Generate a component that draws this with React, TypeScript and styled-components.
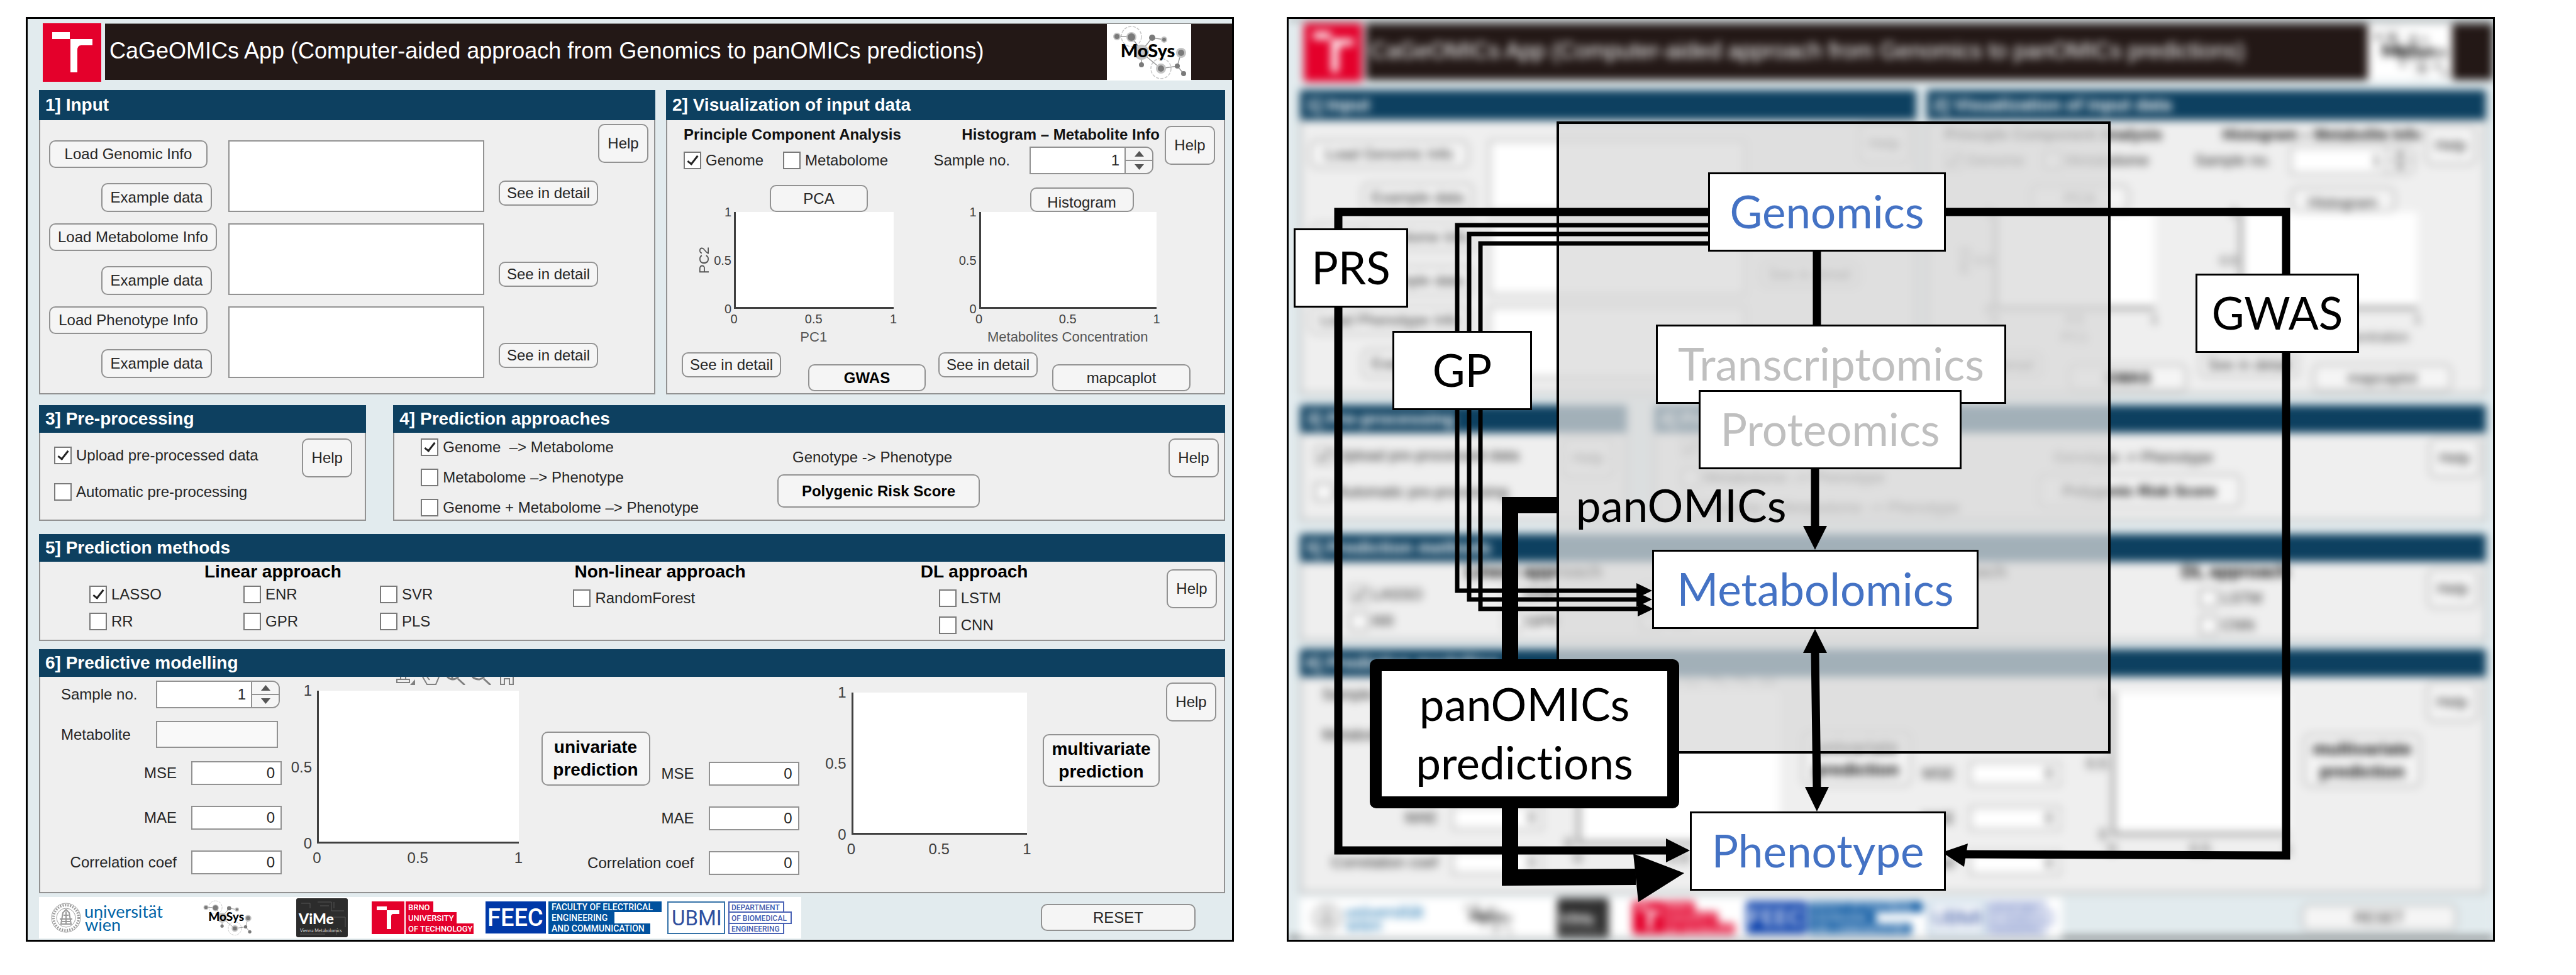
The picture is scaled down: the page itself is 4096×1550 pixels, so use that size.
import React, { useId } from "react";
import styled, { createGlobalStyle, css } from "styled-components";

const GlobalStyle = createGlobalStyle`
  *, *::before, *::after { box-sizing: border-box; }
  body { margin: 0; background: #fff; }
  body, button, input, textarea { font-family: "Liberation Sans", Arial, sans-serif; }
`;

const color = {
  backdrop: "#e2ebee",
  navy: "#0d4060",
  panel: "#efefef",
  line: "#929292",
  control: "#f5f5f5",
  text: "#262626",
  axis: "#404040",
  red: "#e4002b",
  bar: "#231816",
};

/* ---------- page and windows ---------- */

const Page = styled.main`
  display: flex;
  align-items: flex-start;
  gap: 84px;
  padding: 27px 129px 53px 41px;
`;

const Window = styled.section`
  position: relative;
  flex: 1 1 0;
  min-width: 0;
  border: 3px solid #000;
  background: ${color.backdrop};
  overflow: hidden;
`;

const AppBody = styled.div<{ $blurred?: boolean }>`
  display: flex;
  flex-direction: column;
  padding-top: 7px;
  background: ${color.backdrop};
  font-size: 24px;
  line-height: 28px;
  color: ${color.text};
  ${(p) =>
    p.$blurred &&
    css`
      filter: blur(7px);
      box-shadow: inset 0 -5px #444, inset 0 3px #777;
    `}
`;

const TopBar = styled.header`
  display: flex;
  align-items: flex-start;
  gap: 6px;
  padding-left: 24px;
  margin-bottom: 13px;
`;

const LogoTile = styled.svg`
  flex: none;
  display: block;
`;

const TitleStrip = styled.div`
  flex: 1;
  min-width: 0;
  display: flex;
  align-items: center;
  justify-content: space-between;
  height: 90px;
  padding: 0 65px 0 7px;
  background: ${color.bar};
  border-top: 1px solid #8a8a8a;
`;

const Title = styled.h1`
  margin: 0;
  padding-bottom: 4px;
  font-size: 36px;
  line-height: 44px;
  font-weight: 400;
  color: #fff;
  white-space: nowrap;
`;

const Row = styled.div<{ $cols: string; $gap?: number; $below: number }>`
  display: grid;
  grid-template-columns: ${(p) => p.$cols};
  gap: ${(p) => p.$gap ?? 0}px;
  padding: 0 11px 0 18px;
  margin-bottom: ${(p) => p.$below}px;
`;

const PanelBox = styled.section<{ $h: number }>`
  display: flex;
  flex-direction: column;
  min-width: 0;
  min-height: ${(p) => p.$h}px;
  border: 2px solid ${color.line};
  background: ${color.panel};
`;

const PanelHeading = styled.h2<{ $h: number }>`
  margin: -2px -2px 0;
  height: ${(p) => p.$h}px;
  padding-left: 10px;
  line-height: ${(p) => p.$h}px;
  font-size: 28px;
  font-weight: 700;
  color: #fff;
  background: ${color.navy};
  white-space: nowrap;
`;

/* ---------- controls ---------- */

const Button = styled.button<{ $w?: number; $h?: number; $bold?: boolean; $big?: boolean; $low?: boolean }>`
  flex: none;
  width: ${(p) => (p.$w ? `${p.$w}px` : "auto")};
  height: ${(p) => p.$h ?? 40}px;
  padding: ${(p) => (p.$low ? "8px 0 0" : "0")};
  border: 2px solid ${color.line};
  border-radius: 10px;
  background: ${color.control};
  color: ${(p) => (p.$bold ? "#000" : color.text)};
  font-size: ${(p) => (p.$big ? 28 : 24)}px;
  line-height: ${(p) => (p.$big ? 36 : 28)}px;
  font-weight: ${(p) => (p.$bold ? 700 : 400)};
  white-space: nowrap;
`;

const LoadButton = styled(Button)`
  justify-self: start;
  min-width: 252px;
  padding: 0 12px;
`;

const HelpButton = styled(Button).attrs({ $w: 80, $h: 62, children: "Help" })`
  align-self: start;
  justify-self: end;
`;

const Tick = styled.label`
  display: flex;
  align-items: center;
  gap: 7px;
  height: 28px;
  white-space: pre;
`;

const Box = styled.input.attrs({ type: "checkbox" })`
  appearance: none;
  flex: none;
  position: relative;
  width: 28px;
  height: 28px;
  margin: 0;
  border: 2px solid #7a7a7a;
  background: #fff;
  &:checked::after {
    content: "";
    position: absolute;
    left: 8px;
    top: 1px;
    width: 9px;
    height: 18px;
    border: solid #222;
    border-width: 0 3px 3px 0;
    transform: rotate(38deg);
  }
`;

const Check = ({ label, on }: { label: string; on?: boolean }) => (
  <Tick>
    <Box defaultChecked={on} />
    {label}
  </Tick>
);

const TextBox = styled.input<{ $w: number; $h: number; $idle?: boolean }>`
  width: ${(p) => p.$w}px;
  height: ${(p) => p.$h}px;
  padding: 0 9px;
  border: 2px solid ${color.line};
  background: ${(p) => (p.$idle ? "#f9f9f9" : "#fff")};
  color: ${color.text};
  font-size: 24px;
  text-align: right;
`;

const Notes = styled.textarea`
  display: block;
  width: 100%;
  height: 114px;
  border: 2px solid ${color.line};
  background: #fff;
  resize: none;
`;

const SpinFrame = styled.span`
  display: flex;
  width: 197px;
  height: 44px;
  border: 2px solid ${color.line};
  border-radius: 0 12px 12px 0;
  background: ${color.control};
  overflow: hidden;
`;

const SpinValue = styled.input`
  flex: 1;
  min-width: 0;
  padding: 0 8px;
  border: 0;
  border-right: 2px solid ${color.line};
  background: #fff;
  color: ${color.text};
  font-size: 24px;
  text-align: right;
`;

const SpinKeys = styled.span`
  display: flex;
  flex-direction: column;
  width: 42px;
`;

const SpinKey = styled.button`
  flex: 1;
  display: flex;
  align-items: center;
  justify-content: center;
  padding: 0;
  border: 0;
  background: ${color.control};
  & + & { border-top: 2px solid ${color.line}; }
`;

const Spinner = ({ id }: { id: string }) => (
  <SpinFrame>
    <SpinValue id={id} inputMode="numeric" defaultValue="1" />
    <SpinKeys>
      <SpinKey type="button" aria-label="Increase">
        <svg width="15" height="9" viewBox="0 0 15 9"><path d="M0 9 7.500 0 15 9z" fill="#555" /></svg>
      </SpinKey>
      <SpinKey type="button" aria-label="Decrease">
        <svg width="15" height="9" viewBox="0 0 15 9"><path d="M0 0 7.500 9 15 0z" fill="#555" /></svg>
      </SpinKey>
    </SpinKeys>
  </SpinFrame>
);

/* ---------- plots ---------- */

const PlotGrid = styled.div<{ $gutter: number; $large?: boolean }>`
  display: grid;
  grid-template-columns: ${(p) => p.$gutter}px minmax(0, 1fr);
  font-size: ${(p) => (p.$large ? 24 : 20)}px;
  color: ${color.axis};
`;

const PlotSide = styled.div`
  display: flex;
  justify-content: flex-end;
  align-items: stretch;
`;

const AxisTitle = styled.span`
  font-size: 22px;
  line-height: 26px;
  text-align: center;
  color: #555;
`;

const BottomTitle = styled(AxisTitle)`
  grid-column: 2;
`;

const SideTitle = styled(AxisTitle)`
  line-height: 22px;
  writing-mode: vertical-rl;
  transform: rotate(180deg);
`;

const YTicks = styled.div<{ $large?: boolean }>`
  display: flex;
  flex-direction: column;
  justify-content: space-between;
  width: ${(p) => (p.$large ? 42 : 36)}px;
  padding-right: ${(p) => (p.$large ? 8 : 4)}px;
  span {
    display: flex;
    align-items: center;
    justify-content: flex-end;
    height: 0;
  }
`;

const XTicks = styled.div<{ $large?: boolean }>`
  grid-column: 2;
  display: flex;
  align-items: center;
  justify-content: space-between;
  height: ${(p) => (p.$large ? 46 : 32)}px;
  span {
    display: flex;
    justify-content: center;
    width: 0;
  }
`;

const PlotArea = styled.div<{ $h: number }>`
  height: ${(p) => p.$h}px;
  border: solid ${color.axis};
  border-width: 0 0 3px 3px;
  background: #fff;
`;

const Plot = (p: { gutter: number; h: number; large?: boolean; x?: string; y?: string }) => (
  <PlotGrid $gutter={p.gutter} $large={p.large}>
    <PlotSide>
      {p.y && <SideTitle>{p.y}</SideTitle>}
      <YTicks $large={p.large}>
        <span>1</span>
        <span>0.5</span>
        <span>0</span>
      </YTicks>
    </PlotSide>
    <PlotArea $h={p.h} />
    <XTicks $large={p.large}>
      <span>0</span>
      <span>0.5</span>
      <span>1</span>
    </XTicks>
    {p.x && <BottomTitle>{p.x}</BottomTitle>}
  </PlotGrid>
);

/* ---------- 1] input ---------- */

const InputBody = styled.div`
  display: flex;
  padding: 6px 9px 0 14px;
`;

const InputRows = styled.div`
  flex: 1;
  display: flex;
  flex-direction: column;
  gap: 18px;
  padding-top: 26px;
`;

const InputRow = styled.div`
  display: grid;
  grid-template-columns: 285px minmax(0, 1fr);
  height: 114px;
`;

const InputActions = styled.div`
  display: flex;
  flex-direction: column;
  align-items: flex-start;
  justify-content: space-between;
`;

const ExampleButton = styled(Button).attrs({ $w: 176, $h: 46 })`
  margin-left: 83px;
`;

const DetailButton = styled(Button).attrs({ $w: 158, $h: 40, children: "See in detail" })``;

const DetailColumn = styled.div`
  display: flex;
  flex-direction: column;
  align-items: flex-end;
  gap: 89px;
  width: 181px;
  padding-top: 90px;
`;

const kinds = ["Genomic", "Metabolome", "Phenotype"];

const InputPanel = () => (
  <PanelBox $h={484}>
    <PanelHeading $h={48}>1] Input</PanelHeading>
    <InputBody>
      <InputRows>
        {kinds.map((kind) => (
          <InputRow key={kind}>
            <InputActions>
              <LoadButton type="button" $h={44}>{`Load ${kind} Info`}</LoadButton>
              <ExampleButton type="button">Example data</ExampleButton>
            </InputActions>
            <Notes aria-label={`${kind} info`} />
          </InputRow>
        ))}
      </InputRows>
      <DetailColumn>
        {kinds.map((kind) => (
          <DetailButton key={kind} type="button" />
        ))}
      </DetailColumn>
      <HelpButton type="button" />
    </InputBody>
  </PanelBox>
);

/* ---------- 2] visualization ---------- */

const VisualBody = styled.div`
  display: grid;
  grid-template-columns: minmax(0, 389fr) minmax(0, 359fr) 80px;
  gap: 8px;
  padding: 9px 14px 0 26px;
`;

const VisualColumn = styled.div`
  display: flex;
  flex-direction: column;
`;

const SubTitle = styled.h3<{ $right?: boolean }>`
  margin: 0 0 5px;
  font-size: 24px;
  line-height: 28px;
  color: #111;
  text-align: ${(p) => (p.$right ? "right" : "left")};
  white-space: nowrap;
`;

const Controls = styled.div<{ $spread?: boolean }>`
  display: flex;
  align-items: center;
  justify-content: ${(p) => (p.$spread ? "space-between" : "flex-start")};
  gap: 31px;
  height: 44px;
  padding-right: ${(p) => (p.$spread ? 10 : 0)}px;
  margin-bottom: 17px;
`;

const PlotButton = styled.div<{ $left: number }>`
  display: flex;
  align-items: flex-end;
  height: 43px;
  padding-left: ${(p) => p.$left}px;
`;

const PlotPad = styled.div<{ $right: number }>`
  padding-right: ${(p) => p.$right}px;
`;

const VisualActions = styled.div`
  display: grid;
  grid-template-columns: 201px 207px 181px auto;
  align-items: end;
  justify-content: start;
  height: 62px;
  padding-left: 23px;
  margin-top: 11px;
  ${DetailButton} { align-self: start; }
`;

const VisualPanel = () => {
  const id = useId();
  return (
    <PanelBox $h={484}>
      <PanelHeading $h={48}>2] Visualization of input data</PanelHeading>
      <VisualBody>
        <VisualColumn>
          <SubTitle>Principle Component Analysis</SubTitle>
          <Controls>
            <Check label="Genome" on />
            <Check label="Metabolome" />
          </Controls>
          <PlotButton $left={137}>
            <Button type="button" $w={156} $h={43}>PCA</Button>
          </PlotButton>
          <PlotPad $right={56}>
            <Plot gutter={80} h={154} x="PC1" y="PC2" />
          </PlotPad>
        </VisualColumn>
        <VisualColumn>
          <SubTitle $right>Histogram – Metabolite Info</SubTitle>
          <Controls $spread>
            <label htmlFor={id}>Sample no.</label>
            <Spinner id={id} />
          </Controls>
          <PlotButton $left={153}>
            <Button type="button" $w={165} $h={39} $low>Histogram</Button>
          </PlotButton>
          <PlotPad $right={5}>
            <Plot gutter={72} h={154} x="Metabolites Concentration" />
          </PlotPad>
        </VisualColumn>
        <HelpButton type="button" />
      </VisualBody>
      <VisualActions>
        <DetailButton type="button" />
        <Button type="button" $w={187} $h={43} $bold>GWAS</Button>
        <DetailButton type="button" />
        <Button type="button" $w={220} $h={43}>mapcaplot</Button>
      </VisualActions>
    </PanelBox>
  );
};

/* ---------- 3] and 4] ---------- */

const SplitBody = styled.div<{ $right: number }>`
  display: flex;
  padding: 9px ${(p) => p.$right}px 0 0;
`;

const CheckList = styled.div<{ $left: number; $top: number; $gap: number }>`
  flex: 1;
  display: flex;
  flex-direction: column;
  gap: ${(p) => p.$gap}px;
  padding: ${(p) => p.$top}px 0 0 ${(p) => p.$left}px;
`;

const RiskColumn = styled.div`
  display: flex;
  flex-direction: column;
  flex: none;
  width: 622px;
  gap: 11px;
  padding-top: 14px;
  p {
    margin: 0;
    padding-left: 24px;
    line-height: 32px;
  }
`;

const PreprocessingPanel = () => (
  <PanelBox $h={184}>
    <PanelHeading $h={44}>3] Pre-processing</PanelHeading>
    <SplitBody $right={20}>
      <CheckList $left={22} $top={13} $gap={30}>
        <Check label="Upload pre-processed data" on />
        <Check label="Automatic pre-processing" />
      </CheckList>
      <HelpButton type="button" />
    </SplitBody>
  </PanelBox>
);

const ApproachPanel = () => (
  <PanelBox $h={184}>
    <PanelHeading $h={44}>4] Prediction approaches</PanelHeading>
    <SplitBody $right={8}>
      <CheckList $left={42} $top={0} $gap={20}>
        <Check label="Genome  –> Metabolome" on />
        <Check label="Metabolome –> Phenotype" />
        <Check label="Genome + Metabolome –> Phenotype" />
      </CheckList>
      <RiskColumn>
        <p>Genotype -&gt; Phenotype</p>
        <Button type="button" $w={322} $h={53} $bold>Polygenic Risk Score</Button>
      </RiskColumn>
      <HelpButton type="button" />
    </SplitBody>
  </PanelBox>
);

/* ---------- 5] prediction methods ---------- */

const MethodsBody = styled.div`
  display: grid;
  grid-template-columns: minmax(0, 769fr) minmax(0, 552fr) minmax(0, 391fr) 80px;
  padding: 0 11px 0 78px;
`;

const GroupTitle = styled.h3<{ $left: number; $below: number }>`
  margin: 0 0 ${(p) => p.$below}px;
  padding-left: ${(p) => p.$left}px;
  font-size: 28px;
  line-height: 32px;
  color: #000;
`;

const Choices = styled.div<{ $cols: string; $left?: number }>`
  display: grid;
  grid-template-columns: ${(p) => p.$cols};
  row-gap: 15px;
  padding-left: ${(p) => p.$left ?? 0}px;
`;

const HelpDrop = styled.div`
  padding-top: 12px;
`;

const MethodsPanel = () => (
  <PanelBox $h={170}>
    <PanelHeading $h={44}>5] Prediction methods</PanelHeading>
    <MethodsBody>
      <div>
        <GroupTitle $left={183} $below={6}>Linear approach</GroupTitle>
        <Choices $cols="245px 217px 1fr">
          <Check label="LASSO" on />
          <Check label="ENR" />
          <Check label="SVR" />
          <Check label="RR" />
          <Check label="GPR" />
          <Check label="PLS" />
        </Choices>
      </div>
      <div>
        <GroupTitle $left={2} $below={12}>Non-linear approach</GroupTitle>
        <Choices $cols="1fr">
          <Check label="RandomForest" />
        </Choices>
      </div>
      <div>
        <GroupTitle $left={0} $below={12}>DL approach</GroupTitle>
        <Choices $cols="1fr" $left={29}>
          <Check label="LSTM" />
          <Check label="CNN" />
        </Choices>
      </div>
      <HelpDrop>
        <HelpButton type="button" />
      </HelpDrop>
    </MethodsBody>
  </PanelBox>
);

/* ---------- 6] predictive modelling ---------- */

const ModelBody = styled.div`
  display: grid;
  grid-template-columns: 351px minmax(0, 376fr) 446px minmax(0, 362fr) 211px 90px;
  padding: 0 12px 0 33px;
`;

const Fields = styled.div`
  display: flex;
  flex-direction: column;
  gap: 21px;
  padding-top: 6px;
`;

const LeadField = styled.div`
  display: grid;
  grid-template-columns: 151px 197px;
  align-items: center;
  height: 43px;
`;

const Scores = styled.div`
  display: flex;
  flex-direction: column;
  gap: 33px;
`;

const ScoreField = styled.label`
  display: flex;
  align-items: center;
  justify-content: flex-end;
  gap: 23px;
`;

const Score = ({ label }: { label: string }) => (
  <ScoreField>
    {label}
    <TextBox $w={144} $h={38} inputMode="decimal" defaultValue="0" />
  </ScoreField>
);

const ModelPlot = styled.div<{ $top: number }>`
  padding-top: ${(p) => p.$top}px;
`;

const AxesTools = styled.svg`
  display: block;
  margin: 0 7px 9px auto;
`;

const Univariate = styled(Scores)`
  padding: 87px 0 0 36px;
`;

const RunRow = styled.div`
  display: flex;
  align-items: flex-end;
  justify-content: space-between;
`;

const RunSlot = styled.div`
  padding: 91px 0 0 25px;
`;

const HelpSlot = styled.div`
  display: flex;
  justify-content: flex-end;
  padding-top: 9px;
`;

const ModelPanel = () => {
  const id = useId();
  return (
    <PanelBox $h={388}>
      <PanelHeading $h={44}>6] Predictive modelling</PanelHeading>
      <ModelBody>
        <Fields>
          <LeadField>
            <label htmlFor={`${id}n`}>Sample no.</label>
            <Spinner id={`${id}n`} />
          </LeadField>
          <LeadField>
            <label htmlFor={`${id}m`}>Metabolite</label>
            <TextBox id={`${id}m`} $w={194} $h={43} $idle />
          </LeadField>
          <Scores>
            <Score label="MSE" />
            <Score label="MAE" />
            <Score label="Correlation coef" />
          </Scores>
        </Fields>
        <ModelPlot $top={0}>
          <AxesTools width="189" height="13" viewBox="0 0 189 13" fill="none" stroke="#808080" strokeWidth="2">
            <path d="M2 4h20v5H2zM8 4V0M16 4V0" />
            <path d="M31 13V4l-8 9z" fill="#808080" stroke="none" />
            <path d="M43 0l7 12h14l5-12M50 0l4 5" />
            <path d="M82 0q9 8 18 0M90 0v3M99 3l11 10M122 0q10 8 19 0M140 3l11 10" strokeWidth="3" />
            <path d="M167 0v12h6V3h8v9h6V0" />
          </AxesTools>
          <Plot gutter={56} h={243} large />
        </ModelPlot>
        <Univariate>
          <RunRow>
            <Button type="button" $w={173} $h={86} $bold $big>
              univariate
              <br />
              prediction
            </Button>
            <Score label="MSE" />
          </RunRow>
          <Score label="MAE" />
          <Score label="Correlation coef" />
        </Univariate>
        <ModelPlot $top={25}>
          <Plot gutter={83} h={226} large />
        </ModelPlot>
        <RunSlot>
          <Button type="button" $w={186} $h={84} $bold $big>
            multivariate
            <br />
            prediction
          </Button>
        </RunSlot>
        <HelpSlot>
          <HelpButton type="button" />
        </HelpSlot>
      </ModelBody>
    </PanelBox>
  );
};

/* ---------- logos ---------- */

const markPath = "M15 14h28v11h36v10H61q-6 0-6 8v35H44V25H15z";

const ButMark = ({ size }: { size: number }) => (
  <LogoTile width={size} height={size} viewBox="0 0 93 93" role="img" aria-label="BUT">
    <rect width="93" height="93" fill={color.red} />
    <path d={markPath} fill="#fff" />
  </LogoTile>
);

const Molecule = ({ w, h }: { w: number; h: number }) => (
  <LogoTile width={w} height={h} viewBox="0 0 134 90" role="img" aria-label="MoSys">
    <rect width="134" height="90" fill="#fff" />
    <g fill="none" stroke="#999" strokeWidth="1.500">
      <circle cx="39" cy="20" r="16" strokeDasharray="5 2" stroke="#c8c8c8" />
      <circle cx="86" cy="71" r="16" strokeDasharray="5 2" stroke="#c8c8c8" />
      <path d="M16 20h23l16 24M56 42l16-20 19 3M55 46v19M58 48l28 23 26-4 10 12M112 67l6-21" />
    </g>
    <g fill="#c4c4c4">
      <circle cx="16" cy="20" r="6" />
      <circle cx="39" cy="21" r="8" />
      <circle cx="91" cy="25" r="5" />
      <circle cx="118" cy="46" r="8" />
      <circle cx="86" cy="71" r="8" />
      <circle cx="55" cy="45" r="12" />
    </g>
    <g fill="#7a7a7a">
      <circle cx="16" cy="20" r="4" />
      <circle cx="39" cy="21" r="6" />
      <circle cx="72" cy="22" r="5" />
      <circle cx="91" cy="25" r="3" />
      <circle cx="118" cy="46" r="5" />
      <circle cx="55" cy="65" r="4" />
      <circle cx="86" cy="71" r="5" />
      <circle cx="112" cy="67" r="4" />
      <circle cx="122" cy="79" r="4" />
    </g>
    <text x="65" y="53" textAnchor="middle" fontFamily="Lato, sans-serif" fontWeight="900" fontSize="29" fill="#000">
      MoSys
    </text>
  </LogoTile>
);

const Footer = styled.footer`
  display: flex;
  align-items: center;
  justify-content: space-between;
  height: 68px;
  padding: 0 58px 3px 18px;
`;

const LogoStrip = styled.div`
  display: grid;
  grid-template-columns: 236px 154px 120px 181px 289px auto;
  align-items: center;
  width: 1212px;
  height: 66px;
  padding-left: 19px;
  background: #fff;
`;

const BlockLogo = ({ w, children }: { w: number; children: React.ReactNode }) => (
  <LogoTile width={w} height="52" viewBox={`0 0 ${w} 52`}>
    {children}
  </LogoTile>
);

const caption = { fontFamily: "Roboto, sans-serif", fontWeight: 500, fontSize: 14 };

const Logos = () => (
  <LogoStrip>
    <LogoTile width="180" height="56" viewBox="0 0 180 56">
      <g fill="none" stroke="#9a9a9a">
        <circle cx="24" cy="28" r="23" strokeWidth="1" />
        <circle cx="24" cy="28" r="20" strokeWidth="4" strokeDasharray="2 2" />
        <circle cx="24" cy="28" r="15" />
        <path d="M16 38l3-18 5-5 5 5 3 18zM20 24h8M24 18v20M14 30h20M18 34h12" strokeWidth="2" />
      </g>
      <g fill="#0063a6" fontFamily="Lato, sans-serif" fontSize="27">
        <text x="53" y="28">universität</text>
        <text x="54" y="49">wien</text>
      </g>
    </LogoTile>
    <Molecule w={88} h={60} />
    <LogoTile width="82" height="62" viewBox="0 0 82 62">
      <rect width="82" height="62" rx="3" fill="#2c2c2c" />
      <path d="M34 6h22v14h20M60 6v10M38 12h14M56 30h22v16M8 8h14v8M6 57h40M64 50v8" stroke="#555" fill="none" />
      <text x="4" y="41" fontFamily="Lato, sans-serif" fontWeight="900" fontSize="23" fill="#fff">ViMe</text>
      <text x="6" y="54" fontFamily="Lato, sans-serif" fontSize="7" fill="#ddd">Vienna Metabolomics</text>
    </LogoTile>
    <BlockLogo w={162}>
      <path d="M0 0h52v52H0zM54 0h44v17h37v18h27v17H54z" fill={color.red} />
      <path d="M8 8h16v6h20v6H34q-3 0-3 4v20h-7V14H8z" fill="#fff" />
      <g {...caption} fontSize={13} fill="#fff">
        <text x="58" y="14">BRNO</text>
        <text x="58" y="31">UNIVERSITY</text>
        <text x="58" y="48">OF TECHNOLOGY</text>
      </g>
    </BlockLogo>
    <BlockLogo w={280}>
      <path d="M0 0h96v51H0z" fill="#0038a8" />
      <path d="M100 0h180v17h-75v18h57v17H100z" fill="#00519e" />
      <text x="3" y="39" fontFamily="Roboto, sans-serif" fontWeight="500" fontSize="38" fill="#fff">FEEC</text>
      <g {...caption} fill="#fff">
        <text x="105" y="14">FACULTY OF ELECTRICAL</text>
        <text x="105" y="31">ENGINEERING</text>
        <text x="105" y="48">AND COMMUNICATION</text>
      </g>
    </BlockLogo>
    <BlockLogo w={198}>
      <rect x="1" y="1" width="90" height="50" fill="none" stroke="#3572a8" strokeWidth="2" />
      <path d="M98 1h87v16H98zM98 17h99v18H98zM98 35h87v16H98z" fill="none" stroke="#4a63b5" strokeWidth="2" />
      <text x="7" y="38" fontFamily="Roboto, sans-serif" fontSize="33" fill="#2f4f9e">UBMI</text>
      <g {...caption} fontSize={12} fill="#3f5bb0">
        <text x="102" y="14">DEPARTMENT</text>
        <text x="102" y="31">OF BIOMEDICAL</text>
        <text x="102" y="48">ENGINEERING</text>
      </g>
    </BlockLogo>
  </LogoStrip>
);

/* ---------- application ---------- */

const CagApp = ({ blurred }: { blurred?: boolean }) => (
  <AppBody $blurred={blurred} inert={blurred} aria-hidden={blurred}>
    <TopBar>
      <ButMark size={93} />
      <TitleStrip>
        <Title>CaGeOMICs App (Computer-aided approach from Genomics to panOMICs predictions)</Title>
        <Molecule w={134} h={90} />
      </TitleStrip>
    </TopBar>
    <Row $cols="minmax(0, 980fr) minmax(0, 889fr)" $gap={17} $below={17}>
      <InputPanel />
      <VisualPanel />
    </Row>
    <Row $cols="minmax(0, 520fr) minmax(0, 1322fr)" $gap={43} $below={21}>
      <PreprocessingPanel />
      <ApproachPanel />
    </Row>
    <Row $cols="minmax(0, 1fr)" $below={13}>
      <MethodsPanel />
    </Row>
    <Row $cols="minmax(0, 1fr)" $below={6}>
      <ModelPanel />
    </Row>
    <Footer>
      <Logos />
      <Button type="button" $w={246} $h={43}>RESET</Button>
    </Footer>
  </AppBody>
);

/* ---------- workflow diagram ---------- */

const Canvas = styled.div`
  position: absolute;
  inset: 0;
  font-family: Lato, "Open Sans", sans-serif;
  font-variant-ligatures: none;
  font-size: 71px;
  line-height: 93px;
`;

const Scope = styled.div`
  position: absolute;
  left: 426px;
  top: 163px;
  width: 881px;
  height: 1005px;
  border: 4px solid #000;
  background: rgba(217, 217, 217, 0.735);
`;

const Wires = styled.svg`
  position: absolute;
  left: 0;
  top: 0;
`;

const Node = styled.div<{ $x: number; $y: number; $w: number; $tone?: string }>`
  position: absolute;
  left: ${(p) => p.$x}px;
  top: ${(p) => p.$y}px;
  width: ${(p) => p.$w}px;
  height: 126px;
  display: flex;
  align-items: center;
  justify-content: center;
  padding-bottom: 4px;
  border: 3px solid #000;
  background: #fff;
  color: ${(p) => p.$tone ?? "#000"};
  white-space: nowrap;
`;

const Caption = styled(Node)`
  border: 0;
  background: none;
`;

const Outcome = styled(Node)`
  height: 237px;
  border-width: 19px;
  border-radius: 10px;
  text-align: center;
`;

const blue = "#4472c4";
const grey = "#bfbfbf";

const Workflow = () => (
  <Canvas>
    <Scope />
    <Wires width="1915" height="1464" viewBox="0 0 1915 1464">
      <g fill="none" stroke="#000" strokeWidth="13">
        <path d="M667 307H79V1322H602" />
        <path d="M1045 307H1586V1330L1076 1328" />
        <path d="M840 370V486M837 716V808M837 1006L840 1223" />
        <path d="M667 328H268V909H556M667 342H287V923H556M667 357H305V938H556" strokeWidth="7" />
        <path d="M428 773H352V1018M352 1255V1365L552 1364" strokeWidth="26" />
      </g>
      <path d="M600 1303l38 19-38 19zM1080 1311l-6 37-35-23zM818 806h38l-19 38zM837 970l19 38h-38zM821 1221h38l-19 39z" />
      <path d="M553 897l25 12-25 12zM553 911l25 12-25 12zM555 926l25 12-25 12zM548 1327l81 31-73 46z" />
    </Wires>
    <Node $x={667} $y={244} $w={378} $tone={blue}>Genomics</Node>
    <Node $x={584} $y={486} $w={557} $tone={grey}>Transcriptomics</Node>
    <Node $x={652} $y={590} $w={418} $tone={grey}>Proteomics</Node>
    <Caption $x={463} $y={711} $w={322}>panOMICs</Caption>
    <Node $x={578} $y={844} $w={519} $tone={blue}>Metabolomics</Node>
    <Node $x={638} $y={1260} $w={407} $tone={blue}>Phenotype</Node>
    <Node $x={8} $y={333} $w={182}>PRS</Node>
    <Node $x={165} $y={496} $w={222}>GP</Node>
    <Node $x={1442} $y={405} $w={260}>GWAS</Node>
    <Outcome $x={129} $y={1018} $w={492}>
      panOMICs
      <br />
      predictions
    </Outcome>
  </Canvas>
);

export default function App() {
  return (
    <>
      <GlobalStyle />
      <Page>
        <Window aria-label="CaGeOMICs">
          <CagApp />
        </Window>
        <Window aria-label="Workflow">
          <CagApp blurred />
          <Workflow />
        </Window>
      </Page>
    </>
  );
}
